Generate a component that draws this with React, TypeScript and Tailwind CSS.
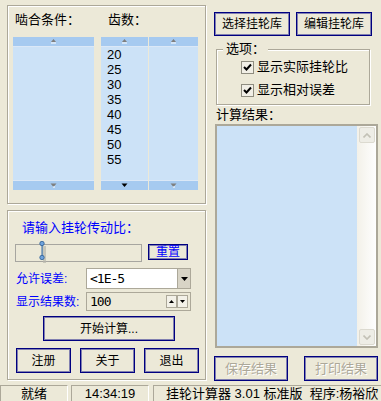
import type { ReactNode } from 'react';

const etched = 'border border-[#aca899] shadow-[inset_1px_1px_0_#fff,1px_1px_0_#fff]';
const navyBtn =
  'flex items-center justify-center border border-[#000080] shadow-[inset_0_0_0_1px_rgba(0,0,128,0.45)] bg-[#ece9d8] text-[12px] leading-[14px]';

function UpArrow() {
  return (
    <svg width="7" height="5" viewBox="0 0 7 5">
      <path d="M3.5 0 L6 3 L1 3 Z" fill="#7f7f7f" />
      <rect x="1" y="3.5" width="5" height="1" fill="#fff" />
    </svg>
  );
}

function DownArrow({ dark }: { dark?: boolean }) {
  return (
    <svg width="7" height="5" viewBox="0 0 7 5">
      <path d="M0.5 0.5 L6.5 0.5 L3.5 4 Z" fill={dark ? '#000' : '#7f7f7f'} />
      {!dark && <rect x="3" y="3.5" width="2" height="1" fill="#fff" />}
    </svg>
  );
}

function ListCol({ className, items, darkDown }: { className: string; items?: string[]; darkDown?: boolean }) {
  return (
    <div className={`flex flex-col h-[153px] ${className}`}>
      <div className="h-[10px] bg-[#a6caf0] flex items-center justify-center border-b border-[#dbe8f7]">
        <UpArrow />
      </div>
      <div className="flex-1 bg-[#cce2f7] pl-[6px] font-['Liberation_Sans',sans-serif] text-[13px] leading-[15px] text-black">
        {items?.map(n => (
          <div key={n}>{n}</div>
        ))}
      </div>
      <div className="h-[10px] bg-[#a6caf0] flex items-center justify-center border-t border-[#dbe8f7]">
        <DownArrow dark={darkDown} />
      </div>
    </div>
  );
}

function Check({ children }: { children: ReactNode }) {
  return (
    <div className="flex items-center h-[14px]">
      <div className="w-[13px] h-[13px] border border-[#8f8d80] bg-[#f1efe6] flex items-center justify-center">
        <svg width="9" height="9" viewBox="0 0 9 9">
          <path d="M1 4 L3.5 6.5 L8 1.5" stroke="#000" strokeWidth="2" fill="none" />
        </svg>
      </div>
      <span className="ml-[3px]">{children}</span>
    </div>
  );
}

export default function App() {
  return (
    <div className="w-[381px] h-[401px] overflow-hidden bg-[#ece9d8] text-black text-[12px] leading-[14px] font-['Liberation_Sans','Noto_Sans_CJK_SC',sans-serif]">
      <div className="h-[383px] flex pl-[7px] pt-[5px]">
        {/* left column */}
        <div className="w-[199px] flex flex-col">
          <div className={`h-[199px] ${etched} flex flex-col pl-[5px]`}>
            <div className="h-[31px] flex pt-[7px] text-[13px]">
              <span className="ml-[2px] w-[93px]">啮合条件：</span>
              <span>齿数：</span>
            </div>
            <div className="flex">
              <ListCol className="w-[81px]" />
              <ListCol className="w-[47px] ml-[7px]" items={['20', '25', '30', '35', '40', '45', '50', '55']} darkDown />
              <ListCol className="w-[49px] ml-[1px]" />
            </div>
          </div>

          <div className={`h-[170px] mt-[6px] ${etched} flex flex-col`}>
            <div className="mt-[10px] ml-[14px] text-[#0000ff] text-[13px]">请输入挂轮传动比：</div>
            <div className="mt-[9px] ml-[7px] flex items-start">
              <div className="w-[127px] h-[18px] border border-[#a7a6a0] relative">
                <svg className="absolute left-[23px] top-[-4px]" width="11" height="23" viewBox="0 0 11 23">
                  <rect x="4" y="5" width="3" height="17" fill="#b8b6ad" opacity="0.7" />
                  <rect x="2.5" y="2" width="1.2" height="15" fill="#3a6ea5" />
                  <circle cx="3" cy="2.5" r="2.2" fill="#6fa3dc" stroke="#2c5d94" strokeWidth="0.8" />
                  <circle cx="3" cy="16.5" r="2.2" fill="#6fa3dc" stroke="#2c5d94" strokeWidth="0.8" />
                </svg>
              </div>
              <div className={`${navyBtn} ml-[6px] w-[40px] h-[16px] text-[#0000ff]`}>重置</div>
            </div>
            <div className="mt-[6px] flex items-center h-[21px]">
              <span className="ml-[8px] w-[70px] text-[#0000ff]">允许误差:</span>
              <div className="w-[105px] h-[21px] border border-[#aca899] bg-white flex items-center">
                <span className="flex-1 pl-[3px] text-[13px] font-['DejaVu_Sans_Mono',monospace] tracking-[-1px]">&lt;1E-5</span>
                <div className="w-[13px] h-[19px] bg-[#d8d4c6] border-l border-[#aca899] flex items-center justify-center">
                  <svg width="7" height="4" viewBox="0 0 7 4">
                    <path d="M0 0 L7 0 L3.5 4 Z" fill="#000" />
                  </svg>
                </div>
              </div>
            </div>
            <div className="mt-[3px] flex items-center h-[19px]">
              <span className="ml-[8px] w-[70px] text-[#0000ff]">显示结果数:</span>
              <div className="w-[105px] h-[19px] border border-[#aca899] flex items-center">
                <span className="flex-1 pl-[3px] text-[13px] font-['DejaVu_Sans_Mono',monospace] tracking-[-1px]">100</span>
                <div className="flex mr-[2px]">
                  <div className="w-[11px] h-[13px] border border-[#aca899] bg-[#f3f1e8] flex items-center justify-center">
                    <svg width="5" height="3" viewBox="0 0 5 3"><path d="M2.5 0 L5 3 L0 3 Z" fill="#000" /></svg>
                  </div>
                  <div className="w-[11px] h-[13px] border border-[#aca899] bg-[#f3f1e8] flex items-center justify-center">
                    <svg width="5" height="3" viewBox="0 0 5 3"><path d="M0 0 L5 0 L2.5 3 Z" fill="#000" /></svg>
                  </div>
                </div>
              </div>
            </div>
            <div className={`${navyBtn} mt-[5px] ml-[35px] w-[132px] h-[25px]`}>开始计算...</div>
            <div className="mt-[7px] ml-[8px] flex gap-[9px]">
              <div className={`${navyBtn} w-[55px] h-[25px]`}>注册</div>
              <div className={`${navyBtn} w-[55px] h-[25px]`}>关于</div>
              <div className={`${navyBtn} w-[55px] h-[25px]`}>退出</div>
            </div>
          </div>
        </div>

        {/* right column */}
        <div className="ml-[8px] w-[164px] flex flex-col">
          <div className="mt-[7px] flex gap-[6px]">
            <div className={`${navyBtn} w-[76px] h-[24px]`}>选择挂轮库</div>
            <div className={`${navyBtn} w-[76px] h-[24px]`}>编辑挂轮库</div>
          </div>
          <div className={`relative mt-[13px] ml-[2px] w-[154px] h-[56px] ${etched} pl-[24px] text-[13px]`}>
            <span className="absolute left-[6px] top-[-8px] px-[3px] bg-[#ece9d8]">选项：</span>
            <div className="mt-[10px]">
              <Check>显示实际挂轮比</Check>
            </div>
            <div className="mt-[9px]">
              <Check>显示相对误差</Check>
            </div>
          </div>
          <div className="mt-[3px] ml-[2px] text-[13px]">计算结果：</div>
          <div className="mt-[2px] ml-[1px] w-[163px] h-[224px] border-2 border-[#aca899] bg-[#cce2f7] flex justify-end">
            <div className="w-[19px] h-full bg-gradient-to-r from-[#f3f1e9] to-[#fefefe] flex flex-col justify-between items-center py-[1px]">
              <div className="w-[16px] h-[16px] rounded-[2px] border border-[#dcdad0] bg-[#eeede6] flex items-center justify-center">
                <svg width="8" height="5" viewBox="0 0 8 5"><path d="M0.5 4.5 L4 1 L7.5 4.5" stroke="#c3c1b6" strokeWidth="1.6" fill="none" /></svg>
              </div>
              <div className="w-[16px] h-[16px] rounded-[2px] border border-[#dcdad0] bg-[#eeede6] flex items-center justify-center">
                <svg width="8" height="5" viewBox="0 0 8 5"><path d="M0.5 0.5 L4 4 L7.5 0.5" stroke="#c3c1b6" strokeWidth="1.6" fill="none" /></svg>
              </div>
            </div>
          </div>
          <div className="mt-[8px] flex gap-[16px]">
            <div className={`${navyBtn} w-[74px] h-[25px] text-[13px] text-[#aca899] [text-shadow:1px_1px_0_#fff]`}>保存结果</div>
            <div className={`${navyBtn} w-[74px] h-[25px] text-[13px] text-[#aca899] [text-shadow:1px_1px_0_#fff]`}>打印结果</div>
          </div>
        </div>
      </div>

      {/* status bar */}
      <div className="h-[18px] flex pt-[2px] text-[13px] leading-[15px]">
        <div className="w-[68px] border-t border-l border-[#aca899] border-r border-r-white text-center">就绪</div>
        <div className="ml-[3px] w-[78px] border-t border-l border-[#aca899] border-r border-r-white text-center">14:34:19</div>
        <div className="ml-[4px] flex-1 border-t border-l border-[#aca899] pl-[12px] whitespace-nowrap">挂轮计算器 3.01 标准版&nbsp;&nbsp;程序:杨裕欣</div>
      </div>
    </div>
  );
}
